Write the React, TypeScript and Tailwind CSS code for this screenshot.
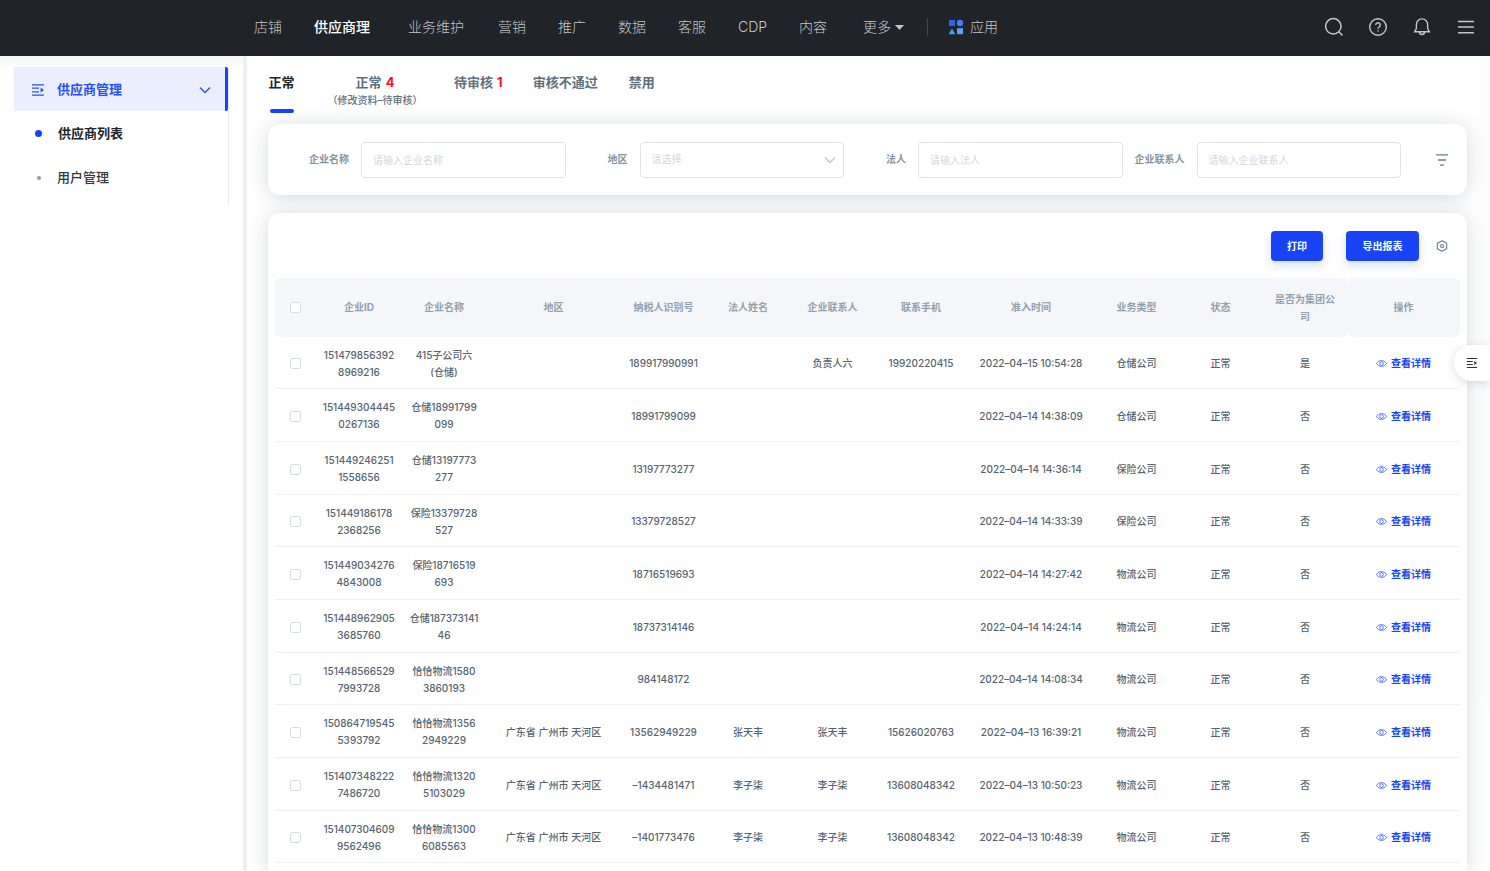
import { clsx } from 'clsx';

const NAV = [
  { label: '店铺' },
  { label: '供应商理', active: true },
  { label: '业务维护', className: 'ml-1.5 mr-0.5' },
  { label: '营销' },
  { label: '推广' },
  { label: '数据' },
  { label: '客服' },
  { label: 'CDP' },
  { label: '内容' },
];

const COLUMNS = [
  { title: '企业ID', width: 'w-[86px]' },
  { title: '企业名称', width: 'w-[84px]' },
  { title: '地区', width: 'w-[135px]' },
  { title: '纳税人识别号', width: 'w-[85px]' },
  { title: '法人姓名', width: 'w-[84px]' },
  { title: '企业联系人', width: 'w-[85px]' },
  { title: '联系手机', width: 'w-[92px]' },
  { title: '准入时间', width: 'w-[128px]' },
  { title: '业务类型', width: 'w-[83px]' },
  { title: '状态', width: 'w-[85px]' },
  { title: '是否为集团公\n司', width: 'w-[84px] rounded-r-md' },
  { title: '操作', width: 'w-[113px] rounded-md' },
];

const GD = '广东省 广州市 天河区';

// id, name, region, tax no, legal person, contact, phone, time, type, status, group company
const ROWS = [
  ['151479856392\n8969216', '415子公司六\n(仓储)', '', '189917990991', '', '负责人六', '19920220415', '2022–04–15 10:54:28', '仓储公司', '正常', '是'],
  ['151449304445\n0267136', '仓储18991799\n099', '', '18991799099', '', '', '', '2022–04–14 14:38:09', '仓储公司', '正常', '否'],
  ['151449246251\n1558656', '仓储13197773\n277', '', '13197773277', '', '', '', '2022–04–14 14:36:14', '保险公司', '正常', '否'],
  ['151449186178\n2368256', '保险13379728\n527', '', '13379728527', '', '', '', '2022–04–14 14:33:39', '保险公司', '正常', '否'],
  ['151449034276\n4843008', '保险18716519\n693', '', '18716519693', '', '', '', '2022–04–14 14:27:42', '物流公司', '正常', '否'],
  ['151448962905\n3685760', '仓储187373141\n46', '', '18737314146', '', '', '', '2022–04–14 14:24:14', '物流公司', '正常', '否'],
  ['151448566529\n7993728', '恰恰物流1580\n3860193', '', '984148172', '', '', '', '2022–04–14 14:08:34', '物流公司', '正常', '否'],
  ['150864719545\n5393792', '恰恰物流1356\n2949229', GD, '13562949229', '张天丰', '张天丰', '15626020763', '2022–04–13 16:39:21', '物流公司', '正常', '否'],
  ['151407348222\n7486720', '恰恰物流1320\n5103029', GD, '–1434481471', '李子柒', '李子柒', '13608048342', '2022–04–13 10:50:23', '物流公司', '正常', '否'],
  ['151407304609\n9562496', '恰恰物流1300\n6085563', GD, '–1401773476', '李子柒', '李子柒', '13608048342', '2022–04–13 10:48:39', '物流公司', '正常', '否'],
];

function MenuIcon({ className }: { className?: string }) {
  return (
    <svg className={className} viewBox="0 0 14 14" fill="none" stroke="currentColor" strokeWidth="1.3">
      <path d="M1 1.8h12M1 5.2h7M1 8.8h7M1 12.2h12" />
      <path d="M9.600 4.600v4.800L13 7z" fill="currentColor" stroke="none" />
    </svg>
  );
}

function Chevron({ className }: { className?: string }) {
  return (
    <svg className={className} viewBox="0 0 12 8" fill="none" stroke="currentColor" strokeWidth="1.4">
      <path d="M1 1.5l5 5 5-5" />
    </svg>
  );
}

function Header() {
  return (
    <header className="flex h-14 items-center bg-[#202328] pb-0.5 pl-[238px] pr-0.5 text-sm font-light text-[#c4c6c9]">
      <nav className="flex items-center">
        {NAV.map(item => (
          <a
            key={item.label}
            href="#"
            className={clsx('px-4', item.className, item.active && 'font-medium text-white')}
          >
            {item.label}
          </a>
        ))}
        <button className="ml-1 flex items-center gap-1 px-4">
          更多
          <svg className="h-[5px] w-[9px]" viewBox="0 0 9 5" fill="currentColor">
            <path d="M0 0h9L4.500 5z" />
          </svg>
        </button>
      </nav>
      <span className="ml-[7px] h-[18px] w-px bg-[#43464b]" />
      <a href="#" className="ml-5 flex items-center gap-1.5">
        <svg className="size-4" viewBox="0 0 16 16">
          <rect x="1" y="1" width="6" height="6" fill="#2a62f6" />
          <circle cx="12" cy="4" r="3.200" fill="#4a7bf8" />
          <path d="M4 9.500L7.300 15.200H.7z" fill="#36a6f8" />
          <rect x="9" y="9.200" width="6" height="6" fill="#5b9ff9" />
        </svg>
        应用
      </a>
      <div className="ml-auto flex">
        <button aria-label="搜索" className="flex w-11 justify-center">
          <svg className="size-5" viewBox="0 0 20 20" fill="none" stroke="currentColor" strokeWidth="1.5">
            <circle cx="9.300" cy="9.300" r="7.700" />
            <path d="M14.800 14.800l3.700 3.700" />
          </svg>
        </button>
        <button aria-label="帮助" className="flex w-11 justify-center">
          <svg className="size-5" viewBox="0 0 20 20" fill="none" stroke="currentColor" strokeWidth="1.400">
            <circle cx="10" cy="10" r="8.300" />
            <path d="M7.700 8a2.300 2.300 0 1 1 3.500 2c-.8.5-1.200.9-1.200 1.800M10 13.200v1.400" />
          </svg>
        </button>
        <button aria-label="通知" className="flex w-11 justify-center">
          <svg className="size-5" viewBox="0 0 20 20" fill="none" stroke="currentColor" strokeWidth="1.400">
            <path d="M4.400 11.500V7.500a5.600 5.600 0 0 1 11.200 0v4l1.800 3.200H2.600zM7.500 15a2.500 2.500 0 0 0 5 0" />
          </svg>
        </button>
        <button aria-label="菜单" className="flex w-11 justify-center">
          <svg className="size-5" viewBox="0 0 20 20" fill="none" stroke="currentColor" strokeWidth="1.600">
            <path d="M2 4.500h16M2 10h16M2 15.800h16" />
          </svg>
        </button>
      </div>
    </header>
  );
}

function Sidebar() {
  return (
    <aside className="w-[247px] shrink-0 border-r-4 border-[#f0f0f4] bg-linear-to-b from-[#f6f6f7] to-white to-[14px] pl-3.5 pt-[11px]">
      <div className="mr-3.5 border-r border-[#e8eaee] bg-white pb-1 text-[13px]">
        <button className="flex h-11 w-full items-center rounded-r-xs border-r-3 border-[#1944f5] bg-[#ebeefe] pl-[17px] pr-3.5 pt-0.5 font-bold text-[#2850f5]">
          <MenuIcon className="mr-3 size-3.5" />
          供应商管理
          <Chevron className="ml-auto h-2 w-3" />
        </button>
        <a href="#" className="flex h-[45px] items-center pl-[21px] font-bold text-[#20262e]">
          <span className="mr-4 size-[7px] rounded-full bg-[#1944f5]" />
          供应商列表
        </a>
        <a href="#" className="flex h-11 items-center pl-[23px] font-medium text-[#303842]">
          <span className="mr-4 size-1 rounded-full bg-[#909ba8]" />
          用户管理
        </a>
      </div>
    </aside>
  );
}

function Tabs() {
  return (
    <div className="flex h-[68px] items-start pt-4 text-[13px] leading-5 font-bold text-[#5f6f7d]">
      <button className="flex w-[27px] flex-col items-center text-[#20262e]">
        正常
        <span className="mt-[17px] h-1 w-6 rounded-full bg-[#1944f5]" />
      </button>
      <button className="ml-[30px] w-[100px]">
        正常 <span className="ml-px text-[#fa0f14]">4</span>
        <span className="block text-[10px] leading-4 font-medium">（修改资料–待审核）</span>
      </button>
      <button className="ml-[29px]">
        待审核 <span className="ml-px text-[#fa0f14]">1</span>
      </button>
      <button className="ml-[30px]">审核不通过</button>
      <button className="ml-[31px]">禁用</button>
    </div>
  );
}

const FIELD =
  'h-9 min-w-0 flex-1 rounded border border-[#dfe2e7] bg-white px-[11px] font-normal outline-none placeholder:text-[#d3d7dd]';

function Filters() {
  const label = 'w-[74px] shrink-0 pr-3 text-right font-bold text-[#8694a1]';
  return (
    <form className="flex h-[71px] shrink-0 items-center rounded-xl bg-white pl-[19px] text-[10px] shadow-[0_2px_20px_rgba(50,62,84,0.2)]">
      <div className="grid flex-1 grid-cols-4">
        <div className="flex items-center">
          <label htmlFor="company" className={label}>企业名称</label>
          <input id="company" className={FIELD} placeholder="请输入企业名称" />
        </div>
        <div className="relative flex items-center">
          <label htmlFor="region" className={label}>地区</label>
          <select id="region" className={clsx(FIELD, 'appearance-none text-[#d3d7dd]')}>
            <option>请选择</option>
          </select>
          <Chevron className="pointer-events-none absolute right-2 h-2 w-3 text-[#c0c6ce]" />
        </div>
        <div className="flex items-center">
          <label htmlFor="legal" className={label}>法人</label>
          <input id="legal" className={FIELD} placeholder="请输入法人" />
        </div>
        <div className="flex items-center">
          <label htmlFor="contact" className={label}>企业联系人</label>
          <input id="contact" className={FIELD} placeholder="请输入企业联系人" />
        </div>
      </div>
      <button type="button" aria-label="更多筛选" className="flex w-[66px] justify-center pl-4 text-[#6d7b89]">
        <svg className="h-3.5 w-3.5" viewBox="0 0 14 14" fill="none" stroke="currentColor" strokeWidth="1.300">
          <path d="M1 1.800h12M3 7h8M5 12.200h4" />
        </svg>
      </button>
    </form>
  );
}

function Check({ label }: { label: string }) {
  return (
    <input
      type="checkbox"
      aria-label={label}
      className="block size-[11px] mx-auto appearance-none rounded-xs border border-[#dadde2] bg-white"
    />
  );
}

function SupplierTable() {
  return (
    <table className="w-full table-fixed border-separate border-spacing-0 text-center text-[10px] leading-[17px] font-medium text-[#56636f]">
      <thead className="text-[#93a0ad]">
        <tr className="h-[59px]">
          <th className="w-[41px] rounded-l-md bg-[#f5f6fa]">
            <Check label="全选" />
          </th>
          {COLUMNS.map(col => (
            <th
              key={col.title}
              className={clsx('whitespace-pre-line bg-[#f5f6fa] font-bold', col.width)}
            >
              {col.title}
            </th>
          ))}
        </tr>
      </thead>
      <tbody>
        {ROWS.map(row => (
          <tr key={row[0]} className="h-[53px] nth-[3n+1]:h-[52px] [&>td]:border-b [&>td]:border-[#eff0f5] [&>td]:pt-0.5">
            <td>
              <Check label={row[0]} />
            </td>
            {row.map((cell, i) => (
              <td key={i} className="whitespace-pre-line">
                {cell}
              </td>
            ))}
            <td>
              <a href="#" className="inline-flex items-center gap-1 align-middle font-bold text-[#1944f5]">
                <svg className="size-[11px]" viewBox="0 0 11 11" fill="none" stroke="currentColor" strokeWidth="0.700">
                  <path d="M.5 5.500C3 1.600 8 1.600 10.500 5.500 8 9.400 3 9.400.5 5.500z" />
                  <circle cx="5.500" cy="5.500" r="1.800" />
                </svg>
                查看详情
              </a>
            </td>
          </tr>
        ))}
      </tbody>
    </table>
  );
}

function TableCard() {
  const button =
    'h-[30px] rounded bg-[#1944f5] pt-px text-[10px] font-bold text-white shadow-[0_4px_10px_rgba(25,68,245,0.2)]';
  return (
    <section className="mt-[18px] flex-1 rounded-t-xl bg-white px-[7px] shadow-[0_2px_20px_rgba(50,62,84,0.2)]">
      <div className="flex h-[65px] items-center justify-end pr-3">
        <button className={clsx(button, 'w-[52px]')}>打印</button>
        <button className={clsx(button, 'ml-[23px] w-[73px]')}>导出报表</button>
        <button aria-label="表格设置" className="ml-[17px] text-[#6d7b89]">
          <svg className="size-3" viewBox="0 0 12 12" fill="none" stroke="currentColor" strokeWidth="1.100">
            <path d="M6 .7l4.700 2.500v5.600L6 11.300 1.300 8.800V3.200z" strokeLinejoin="round" />
            <circle cx="6" cy="6" r="1.500" />
          </svg>
        </button>
      </div>
      <SupplierTable />
    </section>
  );
}

export default function App() {
  return (
    <div className="flex min-h-screen flex-col overflow-hidden bg-white font-['Inter','Noto_Sans_CJK_SC',sans-serif]">
      <Header />
      <div className="relative flex flex-1">
        <Sidebar />
        <main className="flex min-w-0 flex-1 flex-col overflow-hidden pl-[21px] pr-[23px]">
          <Tabs />
          <Filters />
          <TableCard />
        </main>
        {/* collapsed drawer: only its shadow and the handle stay visible */}
        <div className="pointer-events-none absolute top-0 -right-px h-[650px] w-px shadow-[0_0_16px_rgba(50,62,84,0.3)]" />
        <button
          aria-label="展开面板"
          className="absolute right-0 top-[289px] flex h-9 w-9 items-center justify-center rounded-l-full rounded-br-xl bg-white text-[#2c333b] shadow-[0_2px_10px_rgba(50,62,84,0.18)]"
        >
          <MenuIcon className="size-3" />
        </button>
      </div>
    </div>
  );
}
